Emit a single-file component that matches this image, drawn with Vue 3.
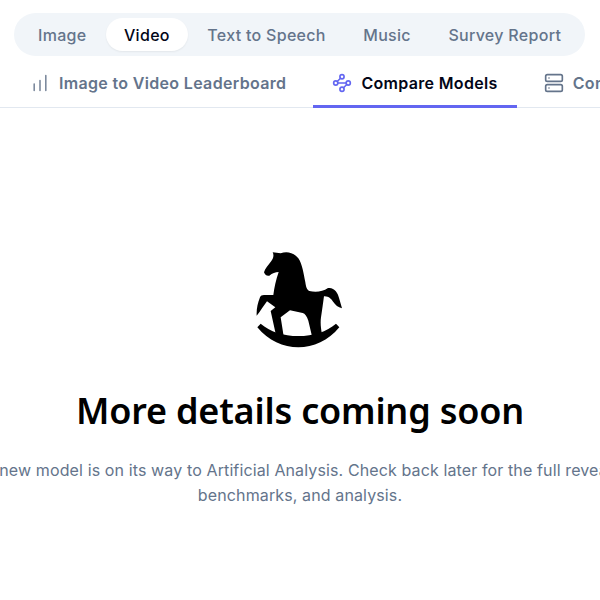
<template>
  <div class="page">
    <div class="pills-wrap">
      <nav class="pills">
        <button
          v-for="item in mediaTypes"
          :key="item"
          class="pill"
          :class="{ active: item === 'Video' }"
        >
          {{ item }}
        </button>
      </nav>
    </div>

    <nav class="tabs">
      <a class="tab">
        <svg class="tab-icon" width="20" height="20" viewBox="0 0 24 24" fill="none" stroke="currentColor" stroke-width="1.6" stroke-linecap="round" stroke-linejoin="round">
          <path d="M5 21v-8M12 21V9M19 21V3" />
        </svg>
        Image to Video Leaderboard
      </a>
      <a class="tab active">
        <svg class="tab-icon" width="20" height="20" viewBox="0 0 24 24" fill="none" stroke="currentColor" stroke-width="2" stroke-linecap="round" stroke-linejoin="round">
          <circle cx="12" cy="4.5" r="2.5" />
          <path d="m10.2 6.3-3.9 3.9" />
          <circle cx="4.5" cy="12" r="2.5" />
          <path d="M7 12h10" />
          <circle cx="19.5" cy="12" r="2.5" />
          <path d="m13.8 17.7 3.9-3.9" />
          <circle cx="12" cy="19.5" r="2.5" />
        </svg>
        Compare Models
      </a>
      <a class="tab">
        <svg class="tab-icon" width="20" height="20" viewBox="0 0 24 24" fill="none" stroke="currentColor" stroke-width="2" stroke-linecap="round" stroke-linejoin="round">
          <rect x="2" y="2" width="20" height="8" rx="2" />
          <rect x="2" y="14" width="20" height="8" rx="2" />
          <path d="M6 6h.01M6 18h.01" />
        </svg>
        Configuration
      </a>
    </nav>

    <main class="soon">
      <svg class="horse" width="120" height="120" viewBox="0 0 360 360" fill="#000">
        <path d="M98 40 L122 43 C140 36 160 40 175 58 C187 75 191 105 196 130 C198 145 201 153 208 156 C228 160 248 158 264 147 C282 144 294 160 298 180 L306 208 C294 205 286 198 280 189 C274 180 266 171 252 172 C250 185 248 205 243 235 C241 250 242 265 246 285 L216 292 L205 245 C201 232 195 224 188 222 L150 214 L122 235 L131 292 L107 284 L92 216 L106 205 L81 187 C72 198 62 216 50 230 C49 212 53 192 60 175 C62 170 66 168 72 168 L100 168 C103 145 108 122 116 99 C106 99 97 103 88 110 C80 112 74 106 72 100 C75 88 85 78 94 66 C99 58 103 50 98 40 Z" />
        <path d="M52 265 L62 254 C90 278 130 291 175 291 C220 291 260 278 288 254 L298 265 C265 305 220 325 175 325 C130 325 85 305 52 265 Z" />
      </svg>
      <h1 class="title">More details coming soon</h1>
      <p class="desc">A new model is on its way to Artificial Analysis. Check back later for the full reveal, benchmarks, and analysis.</p>
    </main>
  </div>
</template>

<script setup>
const mediaTypes = ['Image', 'Video', 'Text to Speech', 'Music', 'Survey Report']
</script>

<style>
html,
body {
  margin: 0;
  background: #fff;
  overflow: hidden;
}
</style>

<style scoped>
.page {
  width: 600px;
  height: 600px;
  overflow: hidden;
  font-family: Inter, "Liberation Sans", sans-serif;
}

.pills-wrap {
  padding: 13px 15px 0 14px;
}

.pills {
  display: flex;
  align-items: center;
  height: 43px;
  padding: 0 5px 0 6px;
  gap: 1.5px;
  background: #f1f5f9;
  border-radius: 22px;
}

.pill {
  height: 33px;
  padding: 0 18px;
  border: 0;
  border-radius: 17px;
  background: transparent;
  color: #64748b;
  font: 500 16px Inter, "Liberation Sans", sans-serif;
  letter-spacing: 0.3px;
  white-space: nowrap;
}

.pill.active {
  background: #fff;
  color: #020617;
  box-shadow: 0 1px 2px rgba(0, 0, 0, 0.06);
}

.tabs {
  display: flex;
  height: 49px;
  margin-top: 3px;
  padding-left: 11px;
  gap: 8px;
  border-bottom: 1px solid #e2e8f0;
  box-sizing: border-box;
}

.tab {
  display: flex;
  align-items: center;
  flex-shrink: 0;
  gap: 9px;
  height: 49px;
  padding: 0 19px 2px;
  box-sizing: border-box;
  color: #64748b;
  font-size: 16px;
  font-weight: 600;
  letter-spacing: 0.33px;
  white-space: nowrap;
}

.tab.active {
  color: #020617;
  border-bottom: 3px solid #6366f1;
  padding-bottom: 0;
  padding-top: 1px;
}

.tab.active .tab-icon {
  color: #6366f1;
}

.soon {
  display: flex;
  flex-direction: column;
  align-items: center;
  padding-top: 131px;
}

.horse {
  display: block;
}

.title {
  margin: 30px 0 0;
  color: #000;
  font-family: "Noto Sans", sans-serif;
  font-size: 36px;
  font-weight: 600;
  letter-spacing: -0.2px;
  line-height: 44px;
}

.desc {
  flex-shrink: 0;
  width: 672px;
  margin: 25px 0 0;
  color: #64748b;
  font-size: 16px;
  letter-spacing: 0.12px;
  line-height: 25px;
  text-align: center;
}
</style>
